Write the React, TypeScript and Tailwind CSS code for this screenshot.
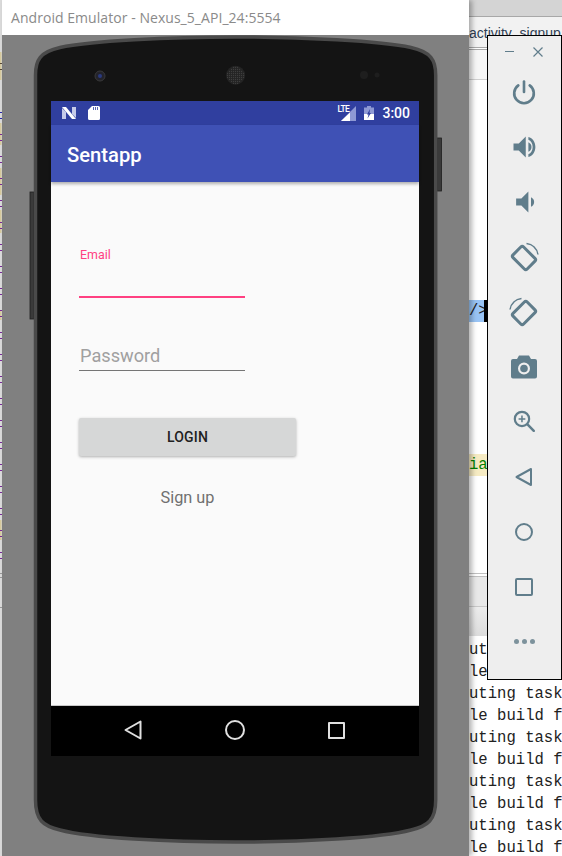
import React from "react";

const slate = "#607d8b";

function Icon({ children, cls = "w-[28px] h-[28px]", vb = "0 0 32 32" }: { children: React.ReactNode; cls?: string; vb?: string }) {
  return (
    <svg viewBox={vb} className={cls} fill="none">
      {children}
    </svg>
  );
}

function Power() {
  return (
    <Icon>
      <path d="M16 4v12" stroke={slate} strokeWidth="3" strokeLinecap="round" />
      <path d="M9.500 8.500a11.200 11.200 0 1 0 13 0" stroke={slate} strokeWidth="3" strokeLinecap="round" />
    </Icon>
  );
}

function VolumeUp() {
  return (
    <Icon>
      <path d="M4 12h6l8-8v24l-8-8H4z" fill={slate} />
      <path d="M21 10.500c2.400 1.300 3.600 3 3.600 5.500s-1.200 4.200-3.600 5.500z" fill={slate} />
      <path d="M21 4.500c4.900 1.300 8 5.700 8 11.500s-3.100 10.200-8 11.500v-3.300c3-1.100 4.900-4.200 4.900-8.200s-1.900-7.100-4.900-8.200z" fill={slate} />
    </Icon>
  );
}

function VolumeDown() {
  return (
    <Icon>
      <path d="M7 12h6l8-8v24l-8-8H7z" fill={slate} />
      <path d="M24 10.500c2.400 1.300 3.600 3 3.600 5.500s-1.200 4.200-3.600 5.500z" fill={slate} />
    </Icon>
  );
}

function Rotate({ flip }: { flip?: boolean }) {
  return (
    <Icon cls={flip ? "w-[32px] h-[32px] -scale-x-100" : "w-[32px] h-[32px]"}>
      <rect x="6" y="9.500" width="20" height="15" rx="2" transform="rotate(45 16 17)" stroke={slate} strokeWidth="3" />
      <path d="M18.500 2.500c6 .8 10.500 5 11.500 11" stroke={slate} strokeWidth="1.500" />
    </Icon>
  );
}

function Camera() {
  return (
    <Icon cls="w-[32px] h-[32px]">
      <path
        fillRule="evenodd"
        clipRule="evenodd"
        d="M11 4.500h10l2 3.500h4a2 2 0 0 1 2 2v15.500a2 2 0 0 1-2 2H5a2 2 0 0 1-2-2V10a2 2 0 0 1 2-2h4zM16 11.500a6 6 0 1 0 0 12a6 6 0 0 0 0-12z"
        fill={slate}
      />
      <circle cx="16" cy="17.500" r="3.800" fill={slate} />
    </Icon>
  );
}

function ZoomIn() {
  return (
    <Icon cls="w-[27px] h-[27px]">
      <circle cx="13" cy="13" r="8.500" stroke={slate} strokeWidth="2.600" />
      <path d="M19.500 19.500 27 27" stroke={slate} strokeWidth="3" strokeLinecap="round" />
      <path d="M9 13h8M13 9v8" stroke={slate} strokeWidth="1.800" />
    </Icon>
  );
}

function Tool({ children }: { children: React.ReactNode }) {
  return <div className="h-[55px] flex items-center justify-center pr-[1px]">{children}</div>;
}

function Toolbar() {
  return (
    <div className="absolute left-[487px] top-[35px] w-[75px] h-[645px] bg-[#eeeeee] border border-black flex flex-col">
      <div className="h-[28px] flex items-center justify-center gap-[19px] pt-[3px] pr-[1px]">
        <div className="w-[9px] h-[1px] bg-[#607d8b]" />
        <svg viewBox="0 0 10 10" className="w-[10px] h-[10px]">
          <path d="M.5.5l9 9M9.500.5l-9 9" stroke={slate} strokeWidth="1.200" />
        </svg>
      </div>
      <Tool><Power /></Tool>
      <Tool><VolumeUp /></Tool>
      <Tool><VolumeDown /></Tool>
      <Tool><Rotate /></Tool>
      <Tool><Rotate flip /></Tool>
      <Tool><Camera /></Tool>
      <Tool><ZoomIn /></Tool>
      <Tool>
        <Icon cls="w-[20px] h-[20px]" vb="0 0 20 20">
          <path d="M2.500 10 17 2v16z" stroke={slate} strokeWidth="2" strokeLinejoin="round" />
        </Icon>
      </Tool>
      <Tool>
        <div className="w-[18px] h-[18px] rounded-full border-2 border-[#607d8b]" />
      </Tool>
      <Tool>
        <div className="w-[18px] h-[18px] rounded-[2px] border-2 border-[#607d8b]" />
      </Tool>
      <Tool>
        <div className="flex gap-[3px]">
          <div className="w-[5px] h-[5px] rounded-full bg-[#7d929c]" />
          <div className="w-[5px] h-[5px] rounded-full bg-[#7d929c]" />
          <div className="w-[5px] h-[5px] rounded-full bg-[#7d929c]" />
        </div>
      </Tool>
    </div>
  );
}

function Ide() {
  const rows = ["ut.", "le", "uting task", "le build f", "uting task", "le build f", "uting task", "le build f", "uting task", "le build f"];
  return (
    <div className="absolute left-[469px] top-0 w-[93px] h-[856px] bg-white overflow-hidden font-['Liberation_Mono',monospace] text-[15.6px]">
      <div className="h-[17px] bg-[#d4d4d4] border-b border-[#a8a8a8]" />
      <div className="h-[30px] pt-[4px] text-[14px] leading-[24px] text-[#2f3f55] whitespace-nowrap font-['Liberation_Sans',sans-serif] bg-[#f2f2f2]">
        activity_signup
      </div>
      <div className="h-[3px] border-t border-b border-[#a8a8a8] bg-white" />
      <div className="h-[30px] border-b border-[#d0d0d0] bg-[#f6f6f6]" />
      <div className="h-[220px]" />
      <div className="h-[22px] w-[18px] flex">
        <div className="w-[15px] bg-[#99c4f5] leading-[22px] text-[#222] whitespace-nowrap">/&gt;</div>
        <div className="w-[3px] bg-black" />
      </div>
      <div className="h-[132px]" />
      <div className="h-[22px] w-[18px] bg-[#f6ebc3] leading-[22px] text-[#008000] whitespace-nowrap">ia.</div>
      <div className="h-[97px]" />
      <div className="h-[4px] border-t border-b border-[#c0c0c0] bg-white" />
      <div className="h-[30px] bg-[#e8e8e8] border-b border-[#c8c8c8]" />
      <div className="h-[29px] bg-gradient-to-b from-[#ececec] to-[#dcdcdc]" />
      <div className="leading-[22px] text-[#222] whitespace-nowrap pt-[3px]">
        {rows.map((r, i) => (
          <div key={i}>{r}</div>
        ))}
      </div>
    </div>
  );
}

const purpleTicks = Array.from({ length: 20 }).flatMap((_, i) => [134 + i * 22, 140 + i * 22]);
const tanBands: [number, number][] = [[52, 80], [123, 145], [168, 195], [210, 233], [310, 320], [520, 540]];

function LeftStrip() {
  return (
    <svg viewBox="0 0 2 856" preserveAspectRatio="none" className="absolute left-0 top-0 w-[2px] h-[856px]">
      <rect x="0" y="0" width="2" height="856" fill="#dcdcdc" />
      {tanBands.map(([a, b]) => (
        <rect key={a} x="0" y={a} width="1.500" height={b - a} fill="#d9cc9e" />
      ))}
      {purpleTicks.map((y) => (
        <rect key={y} x="0" y={y} width="2" height="1" fill="#7a2a9a" />
      ))}
      <rect x="0" y="112" width="2" height="1" fill="#2a2ab0" />
      <rect x="0" y="118" width="2" height="1" fill="#2a2ab0" />
      <rect x="0" y="63" width="2" height="1" fill="#5a4a3a" />
      <rect x="0" y="69" width="2" height="1" fill="#5a4a3a" />
      <rect x="0" y="573" width="2" height="1" fill="#999999" />
      <rect x="0" y="577" width="2" height="1" fill="#999999" />
      <rect x="0" y="607" width="2" height="1" fill="#999999" />
    </svg>
  );
}

function StatusBar() {
  return (
    <div className="h-[24px] bg-[#303f9f] flex items-center pl-[11px] pr-[9px]">
      <svg viewBox="0 0 14 12" className="w-[14px] h-[12px]">
        <path d="M0 1v11h4V5zM10 0h4v11l-4-4z" fill="#c5cae9" />
        <path d="M0 0h4l10 12h-4z" fill="#ffffff" />
      </svg>
      <svg viewBox="0 0 12 14" className="w-[12px] h-[14px] ml-[12px]">
        <path d="M4 0h6.500A1.500 1.500 0 0 1 12 1.500v11a1.500 1.500 0 0 1-1.500 1.500h-9A1.500 1.500 0 0 1 0 12.500V4z" fill="#ffffff" />
        <path d="M5.500 1v3M7.500 1v3M9.500 1v3" stroke="#303f9f" strokeWidth=".8" />
      </svg>
      <div className="flex-1" />
      <div className="relative w-[19px] h-[15px]">
        <svg viewBox="0 0 19 15" className="w-[19px] h-[15px]">
          <path d="M19 0v15H4z" fill="#8e99d4" />
          <path d="M13 6.500V15H4z" fill="#ffffff" />
        </svg>
        <span className="absolute left-0 top-[-1px] text-[8.500px] leading-[8px] font-medium tracking-[-0.6px] text-white font-['Roboto',sans-serif]">LTE</span>
      </div>
      <svg viewBox="0 0 10 14" className="w-[10px] h-[14px] ml-[8px]">
        <path d="M3 0h4v1.500h3V14H0V1.500h3z" fill="#8e99d4" />
        <path d="M0 8h10v6H0z" fill="#ffffff" />
        <path d="M6 3 3 8.500h1.500L3.500 12.500 7 7H5.500z" fill="#303f9f" />
      </svg>
      <span className="ml-[8px] text-[14px] leading-none text-white font-medium font-['Roboto',sans-serif]">3:00</span>
    </div>
  );
}

function Screen() {
  return (
    <div className="absolute left-[51px] top-[101px] w-[368px] h-[655px] bg-[#fafafa] flex flex-col font-['Roboto',sans-serif]">
      <StatusBar />
      <div className="h-[57px] bg-[#3f51b5] flex items-center pl-[16px] pt-[3px] shadow-[0_2px_3px_rgba(0,0,0,0.3)] z-10">
        <span className="text-[20.200px] font-medium text-white leading-none">Sentapp</span>
      </div>
      <div className="flex-1 pl-[28px] flex flex-col items-start">
        <div className="mt-[66px] h-[13px] pl-[1px] text-[12.400px] leading-[13px] text-[#ff4081]">Email</div>
        <div className="mt-[35px] w-[166px] h-[2px] bg-[#ff4081]" />
        <div className="mt-[45px] w-[165px] h-[27px] pl-[1px] text-[18.200px] leading-[26px] text-[#a0a0a0] border-b border-[#757575] box-content">Password</div>
        <div className="mt-[47px] w-[217px] h-[38px] bg-[#d6d7d7] rounded-[2px] shadow-[0_1px_3px_rgba(0,0,0,0.3)] flex items-center justify-center text-[14px] tracking-[0.2px] font-medium text-[#212121]">
          LOGIN
        </div>
        <div className="mt-[32px] w-[217px] text-center text-[16.300px] leading-[20px] text-[#707070]">Sign up</div>
      </div>
      <div className="h-[51px] bg-black border-t border-[#c8c8c8] flex items-center pl-[73px] pb-[2px] gap-[83px]">
        <svg viewBox="0 0 18 20" className="w-[18px] h-[20px]">
          <path d="M1.500 10 16.500 1.500v17z" fill="none" stroke="#e0e0e0" strokeWidth="2" strokeLinejoin="round" />
        </svg>
        <div className="w-[20px] h-[20px] rounded-full border-2 border-[#e0e0e0]" />
        <div className="w-[17px] h-[17px] rounded-[1px] border-2 border-[#e0e0e0]" />
      </div>
    </div>
  );
}

function Phone() {
  const dots: [number, number][] = [];
  for (let x = -8; x <= 8; x += 2) {
    for (let y = -8; y <= 8; y += 2) {
      if (x * x + y * y < 72) dots.push([235.6 + x, 75.3 + y]);
    }
  }
  return (
    <svg viewBox="0 0 562 856" className="absolute left-0 top-0 w-[562px] h-[856px]">
      <rect x="30" y="192" width="4" height="127" fill="#3a3a3a" stroke="#1f1f1f" strokeWidth=".8" />
      <rect x="437" y="138" width="4.500" height="53" fill="#3a3a3a" stroke="#1f1f1f" strokeWidth=".8" />
      <path
        d="M35.500 75C35.500 60 40 52 60 47.500C90 41 170 37 235.600 37C301 37 381 41 411 47.500C431 52 435.700 60 435.700 75V800C435.700 820 428 826 411 830C381 838 301 842 235.600 842C170 842 90 838 60 830C43 826 35.500 820 35.500 800Z"
        fill="#141414"
        stroke="#4a4a4a"
        strokeWidth="3.500"
      />
      <circle cx="100" cy="76" r="5" fill="#23232b" stroke="#3a3a3a" strokeWidth="1" />
      <circle cx="100" cy="76" r="2" fill="#2a3a80" />
      <circle cx="235.600" cy="75.300" r="9.500" fill="#242424" />
      {dots.map(([x, y]) => (
        <circle key={`${x}-${y}`} cx={x} cy={y} r=".6" fill="#444444" />
      ))}
      <circle cx="364" cy="75" r="4" fill="#1e1e1e" />
      <circle cx="377" cy="75" r="2.500" fill="#1e1e1e" />
    </svg>
  );
}

export default function App() {
  return (
    <div className="relative w-[562px] h-[856px] overflow-hidden bg-white font-['Liberation_Sans',sans-serif]">
      <Ide />
      <LeftStrip />
      <div className="absolute left-[2px] top-0 w-[467px] h-[856px] bg-[#808080] shadow-[3px_0_5px_rgba(0,0,0,0.3)]">
        <div className="h-[35px] bg-white pl-[9px] flex items-center text-[14px] tracking-[0.05px] text-[#8a8a8a] font-['Open_Sans',sans-serif]">
          Android Emulator - Nexus_5_API_24:5554
        </div>
      </div>
      <Phone />
      <Screen />
      <Toolbar />
    </div>
  );
}
